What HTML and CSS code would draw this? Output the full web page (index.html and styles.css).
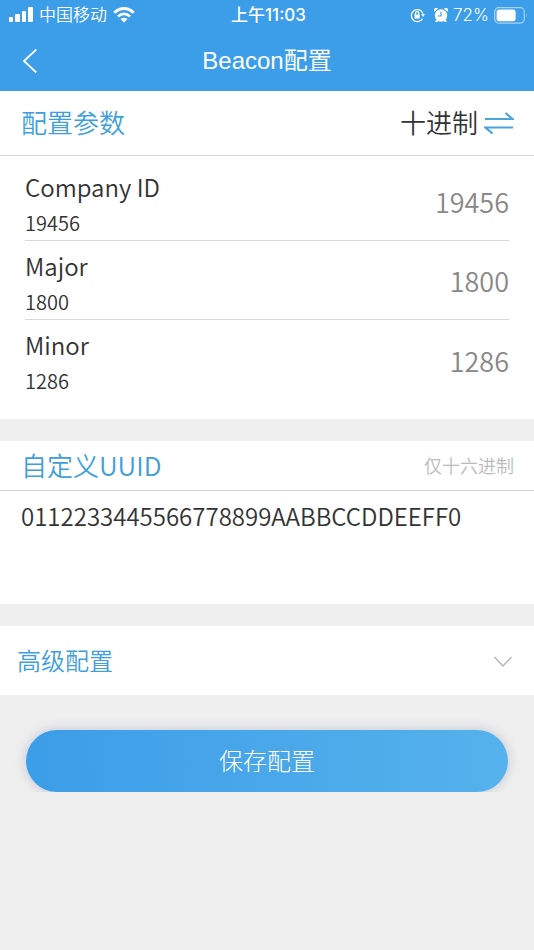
FILE: index.html
```html
<!DOCTYPE html>
<html lang="zh-CN">

<head>
    <meta charset="utf-8">
    <meta name="viewport" content="width=device-width, initial-scale=1.0">
    <title>Beacon配置</title>
    <link rel="stylesheet" href="styles.css">
</head>

<body>
    <header class="top">
        <div class="statusbar">
            <div class="status-left">
                <svg width="24" height="16" viewBox="0 0 24 16" fill="#fff" aria-hidden="true">
                    <rect x="0" y="10" width="4" height="5" rx="1" />
                    <rect x="6" y="7" width="5" height="8" rx="1" />
                    <rect x="13" y="4" width="4" height="11" rx="1" />
                    <rect x="19" y="0" width="5" height="15" rx="1" />
                </svg>
                <span>中国移动</span>
                <svg width="22" height="16" viewBox="0 0 22 16" fill="none" stroke="#fff" stroke-width="2.8" aria-hidden="true">
                    <path d="M1.3 5.7C7 .1 15 .1 20.7 5.7" />
                    <path d="M5 9.5C8.5 6.1 13.5 6.1 17 9.5" />
                    <path d="M11 15.6L7.5 12.1C9.5 10.3 12.5 10.3 14.5 12.1Z" fill="#fff" stroke="none" />
                </svg>
            </div>
            <div class="status-time">上午11:03</div>
            <div class="status-right">
                <svg width="15" height="15" viewBox="0 0 15 15" fill="none" stroke="#fff" stroke-width="1.3" aria-hidden="true">
                    <path d="M12.4 10.8A6 6 0 1 1 13 5.7" />
                    <path d="M11 6.2H15L13.2 9Z" fill="#fff" stroke="none" />
                    <rect x="4.6" y="6.6" width="5" height="4" fill="#fff" stroke="none" />
                    <path d="M5.5 7V5.3a1.6 1.6 0 0 1 3.2 0V7" />
                </svg>
                <svg class="alarm" width="14" height="15" viewBox="0 0 14 15" fill="#fff" aria-hidden="true">
                    <circle cx="7" cy="7.5" r="6.2" />
                    <path d="M.4 3.8A2.4 2.4 0 0 1 4 .6ZM13.6 3.8A2.4 2.4 0 0 0 10 .6ZM2.4 11.5L1 14H3L4.5 13ZM11.6 11.5L13 14H11L9.5 13Z" />
                    <path d="M7 3.8V8H3.8" fill="none" stroke="#3c9de8" stroke-width="1.2" />
                </svg>
                <span>72%</span>
                <svg width="34" height="17" viewBox="0 0 34 17" aria-hidden="true">
                    <rect x=".7" y=".7" width="29.6" height="15.4" rx="4" fill="none" stroke="#a5d3f6" stroke-width="1.2" />
                    <rect x="2.6" y="2.6" width="19" height="11.6" rx="2.5" fill="#fff" />
                    <path d="M32 6Q33.6 8.4 32 10.8Z" fill="#a5d3f6" />
                </svg>
            </div>
        </div>
        <nav class="titlebar">
            <button class="back" type="button" aria-label="返回">
                <svg width="16" height="26" viewBox="0 0 16 26" fill="none" stroke="#fff" stroke-width="1.8">
                    <path d="M14.3 1.5L2 13L14.3 24.5" />
                </svg>
            </button>
            <h1>Beacon配置</h1>
        </nav>
    </header>

    <form>
        <section class="panel">
            <div class="panel-head">
                <h2>配置参数</h2>
                <button class="switch" type="button">
                    十进制
                    <svg width="30" height="24" viewBox="0 0 30 24" fill="none" stroke="#4aa5dc" stroke-width="2.2">
                        <path d="M1 9H28.5L21.5 3" />
                        <path d="M29 17.5H1.5L8.5 23.5" />
                    </svg>
                </button>
            </div>
            <div class="fields">
                <div class="field">
                    <label for="company">Company ID<small>19456</small></label>
                    <input id="company" type="text" value="19456">
                </div>
                <div class="field">
                    <label for="major">Major<small>1800</small></label>
                    <input id="major" type="text" value="1800">
                </div>
                <div class="field">
                    <label for="minor">Minor<small>1286</small></label>
                    <input id="minor" type="text" value="1286">
                </div>
            </div>
        </section>

        <section class="panel">
            <div class="panel-head panel-head-low">
                <h2><label for="uuid">自定义UUID</label></h2>
                <span class="hint">仅十六进制</span>
            </div>
            <textarea class="uuid" id="uuid" spellcheck="false">0112233445566778899AABBCCDDEEFF0</textarea>
        </section>

        <button class="panel advanced" type="button">
            <span>高级配置</span>
            <svg width="20" height="12" viewBox="0 0 20 12" fill="none" stroke="#b4b4b4" stroke-width="1.4">
                <path d="M1.5 1L10 10L18.5 1" />
            </svg>
        </button>

        <button class="save" type="submit">保存配置</button>
    </form>
</body>

</html>
```
FILE: styles.css
```css
* {
    box-sizing: border-box;
}

body {
    margin: 0;
    background-color: #efefef;
    color: #333;
    font-family: 'Noto Sans CJK SC', sans-serif;
    font-weight: 350;
}

h1,
h2 {
    margin: 0;
    font-weight: inherit;
}

button,
input,
textarea {
    margin: 0;
    padding: 0;
    border: none;
    background: none;
    color: inherit;
    font: inherit;
}

svg {
    display: block;
    flex: none;
}

.top {
    background-color: #3c9de8;
    color: #fff;
}

.statusbar {
    display: grid;
    grid-template-columns: 1fr auto 1fr;
    align-items: center;
    height: 30px;
    padding: 0 6px 0 9px;
    font-family: Inter, 'Noto Sans CJK SC', sans-serif;
    font-size: 17px;
    line-height: 30px;
}

.status-left,
.status-right {
    display: flex;
    align-items: center;
    gap: 6px;
}

.status-right {
    justify-content: flex-end;
    gap: 5px;
}

.alarm {
    margin-left: 4px;
}

.status-time {
    font-weight: 500;
}

.titlebar {
    display: grid;
    grid-template-columns: 1fr auto 1fr;
    align-items: center;
    height: 61px;
    padding: 0 22px;
}

.titlebar h1 {
    font-family: 'Liberation Sans', 'Noto Sans CJK SC', sans-serif;
    font-size: 24px;
    font-weight: 400;
    line-height: 36px;
}

.back {
    justify-self: start;
}

.panel {
    margin-bottom: 22px;
    background-color: #fff;
}

.panel-head {
    display: flex;
    justify-content: space-between;
    align-items: center;
    height: 65px;
    padding: 0 20px 2px 21px;
    border-bottom: 1px solid #d4d4d4;
    font-size: 26px;
    line-height: 36px;
}

.panel-head h2 {
    color: #3f9fdc;
    font-size: 26px;
}

.panel-head-low {
    height: 50px;
}

.switch {
    display: flex;
    align-items: center;
    gap: 6px;
}

.hint {
    color: #bbb;
    font-size: 18px;
}

.fields {
    padding: 6px 25px 20px;
}

.field {
    display: flex;
    align-items: center;
    height: 79px;
    border-bottom: 1px solid #d9d9d9;
}

.field:last-child {
    border-bottom: none;
}

.field label {
    flex: none;
    align-self: flex-start;
    padding-top: 6px;
    font-size: 24px;
    line-height: 38px;
}

.field small {
    display: block;
    font-size: 20px;
    line-height: 34px;
}

.field input {
    flex: 1;
    min-width: 0;
    padding-top: 2px;
    color: #888;
    font-size: 27px;
    line-height: 40px;
    text-align: right;
}

.uuid {
    display: block;
    width: 100%;
    height: 113px;
    padding: 5px 21px;
    font-size: 24px;
    line-height: 40px;
    resize: none;
    outline: none;
}

.advanced {
    display: flex;
    justify-content: space-between;
    align-items: center;
    width: 100%;
    height: 69px;
    margin-bottom: 35px;
    padding: 2px 21px 0 17px;
    color: #3f9fdc;
    font-size: 24px;
}

.advanced span {
    padding-bottom: 4px;
}

.save {
    display: block;
    width: calc(100% - 52px);
    height: 62px;
    margin: 0 auto;
    padding-bottom: 4px;
    border-radius: 31px;
    background: linear-gradient(to right, #3c9de8, #56b2ec);
    box-shadow: 0 0 12px rgba(90, 100, 150, .3);
    color: #fff;
    font-size: 24px;
    font-weight: 300;
}
```
